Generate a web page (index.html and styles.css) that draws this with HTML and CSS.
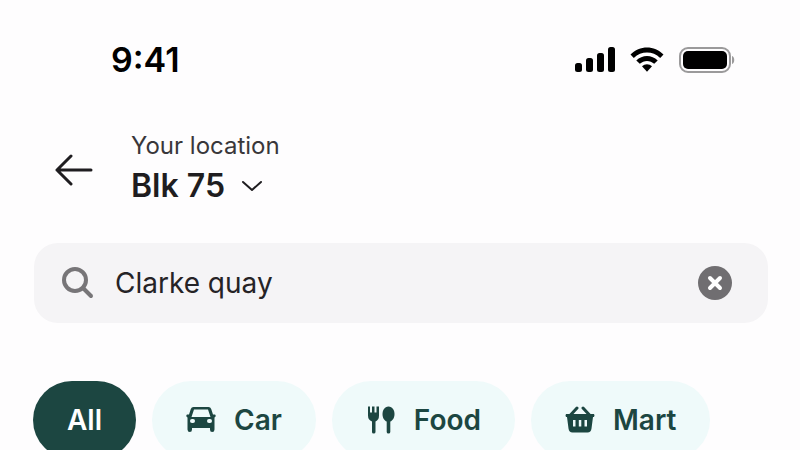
FILE: index.html
```html
<!DOCTYPE html>
<html lang="en">
<head>
    <meta charset="UTF-8">
    <meta name="viewport" content="width=device-width, initial-scale=1.0">
    <title>Search location</title>
    <link rel="stylesheet" href="styles.css">
</head>
<body>
    <div class="status-bar">
        <span class="time">9:41</span>
        <div class="status-icons">
            <svg width="40" height="26" viewBox="0 0 40 26">
                <rect x="0" y="16" width="7" height="9" rx="2.5"/>
                <rect x="11" y="11" width="7" height="14" rx="2.5"/>
                <rect x="22" y="6" width="7" height="19" rx="2.5"/>
                <rect x="33" y="0" width="7" height="25" rx="2.5"/>
            </svg>
            <svg width="34" height="26" viewBox="0 0 34 26">
                <path d="M0.5 7.6C9.5-1.9 24.5-1.9 33.5 7.6L30.2 11C22.8 3.7 11.2 3.7 3.8 11Z"/>
                <path d="M6.3 13.4C12.2 7.4 21.8 7.4 27.7 13.4L24.2 16.8C20.2 12.9 13.8 12.9 9.8 16.8Z"/>
                <path d="M12 19.2C14.8 16.5 19.2 16.5 22 19.2L17 24.8Z"/>
            </svg>
            <svg width="56" height="26" viewBox="0 0 56 26">
                <rect x="1" y="1" width="50" height="24" rx="8" fill="none" stroke="#9b9a9b" stroke-width="2"/>
                <rect x="4" y="4" width="44" height="18" rx="5"/>
                <path d="M53 9C56 10 56 16 53 17Z" fill="#9b9a9b"/>
            </svg>
        </div>
    </div>

    <header class="header">
        <button class="back" type="button" aria-label="Back">
            <svg width="38" height="32" viewBox="0 0 38 32">
                <path d="M36 16H2M16 2L2 16L16 30"/>
            </svg>
        </button>
        <div class="location">
            <span class="location-label">Your location</span>
            <button class="location-name" type="button">
                Blk 75
                <svg width="22" height="12" viewBox="0 0 22 12">
                    <path d="M2 2L11 10L20 2"/>
                </svg>
            </button>
        </div>
    </header>

    <form class="search">
        <svg width="32" height="32" viewBox="0 0 32 32">
            <circle cx="13" cy="13" r="11"/>
            <path d="M21 21L29 29"/>
        </svg>
        <input type="text" aria-label="Search for a place" value="Clarke quay">
        <button class="clear" type="button" aria-label="Clear">
            <svg width="34" height="34" viewBox="0 0 34 34">
                <circle cx="17" cy="17" r="17"/>
                <path d="M12 12L22 22M22 12L12 22"/>
            </svg>
        </button>
    </form>

    <nav class="chips">
        <button class="chip active" type="button">All</button>
        <button class="chip" type="button">
            <svg width="30" height="28" viewBox="0 0 30 28">
                <path fill-rule="evenodd" d="M7.500 1H22.500Q24.500 1 25.200 3L27 8.500H29Q30 9 29.600 10.500L28.500 11.500V23.500Q28.500 26 26.200 26T24 23.500V22H6V23.500Q6 26 3.800 26T1.500 23.500V11.500L0.400 10.500Q0 9 1 8.500H3L4.800 3Q5.500 1 7.500 1ZM8 3.500L5.500 11H24.500L22 3.500Z"/>
                <rect class="light" x="4" y="13" width="5" height="4" rx="2"/>
                <rect class="light" x="21" y="13" width="5" height="4" rx="2"/>
            </svg>
            Car
        </button>
        <button class="chip" type="button">
            <svg width="30" height="28" viewBox="0 0 30 28">
                <path d="M2 0.500H4V6.500H6V0.500H8.500V6.500H10.500V0.500H13V9.500Q13 14 9.500 15.500V26Q9.500 27.500 7.700 27.500T6 26V15.500Q2 14 2 9.500Z"/>
                <path d="M22.500 0.500C26.500 0.500 28.500 4.500 28.500 8C28.500 12 26.500 14.800 24.300 15.500V26Q24.300 27.500 22.500 27.500T20.700 26V15.500C18.500 14.800 16.500 12 16.500 8C16.500 4.500 18.500 0.500 22.500 0.500Z"/>
            </svg>
            Food
        </button>
        <button class="chip" type="button">
            <svg width="30" height="28" viewBox="0 0 30 28">
                <path class="handle" d="M5.500 9L12 2M24.500 9L18 2"/>
                <path fill-rule="evenodd" d="M1 8H29Q30 9.500 29 11H28L26.500 22.500Q26 26.500 22.500 26.500H7.500Q4 26.500 3.500 22.500L2 11H1Q0 9.500 1 8ZM8 14V20.500H10.500V14ZM13.800 14V20.500H16.300V14ZM19.500 14V20.500H22V14Z"/>
            </svg>
            Mart
        </button>
    </nav>
</body>
</html>
```

FILE: styles.css
```css
* {
    box-sizing: border-box;
}
body {
    margin: 0;
    height: 100vh;
    overflow: hidden;
    background-color: #fefdfe;
    color: #1f1d20;
    font-family: Inter, "Liberation Sans", sans-serif;
}
svg {
    display: block;
    flex-shrink: 0;
}
button {
    padding: 0;
    border: none;
    background: none;
    color: inherit;
    font: inherit;
    cursor: pointer;
}
.status-bar {
    display: flex;
    justify-content: space-between;
    align-items: center;
    padding: 40px 65px 0 111px;
    color: #000;
}
.time {
    font-size: 34px;
    font-weight: 600;
    line-height: 40px;
}
.status-icons {
    display: flex;
    gap: 15px;
}
.header {
    display: flex;
    align-items: center;
    gap: 38px;
    padding: 50px 34px 0 55px;
}
.back svg,
.location-name svg {
    fill: none;
    stroke: #1f1d20;
    stroke-width: 3;
    stroke-linecap: round;
    stroke-linejoin: round;
}
.location {
    display: flex;
    flex-direction: column;
    align-items: flex-start;
}
.location-label {
    color: #39373a;
    font-size: 24px;
    line-height: 32px;
}
.location-name {
    display: flex;
    align-items: center;
    gap: 16px;
    font-size: 32px;
    font-weight: 600;
    line-height: 48px;
}
.location-name svg {
    stroke-width: 2;
}
.search {
    display: flex;
    align-items: center;
    gap: 21px;
    height: 80px;
    margin: 33px 32px 0 34px;
    padding: 0 36px 0 28px;
    border-radius: 24px;
    background-color: #f5f4f6;
}
.search > svg {
    fill: none;
    stroke: #777578;
    stroke-width: 4;
    stroke-linecap: round;
}
.search input {
    flex: 1;
    min-width: 0;
    padding: 0;
    border: none;
    outline: none;
    background: none;
    color: #252326;
    font-family: inherit;
    font-size: 28px;
}
.clear circle {
    fill: #706e71;
}
.clear path {
    stroke: #fff;
    stroke-width: 4;
    stroke-linecap: round;
}
.chips {
    display: flex;
    gap: 16px;
    padding: 58px 32px 0 33px;
}
.chip {
    display: flex;
    align-items: center;
    gap: 18px;
    height: 78px;
    padding: 0 34px;
    border-radius: 39px;
    background-color: #effafa;
    color: #1c4641;
    font-size: 28px;
    font-weight: 600;
}
.chip svg {
    fill: #1c4641;
}
.chip .light {
    fill: #effafa;
}
.chip .handle {
    stroke: #1c4641;
    stroke-width: 3;
    stroke-linecap: round;
}
.chip.active {
    background-color: #1c4641;
    color: #fff;
}
```
